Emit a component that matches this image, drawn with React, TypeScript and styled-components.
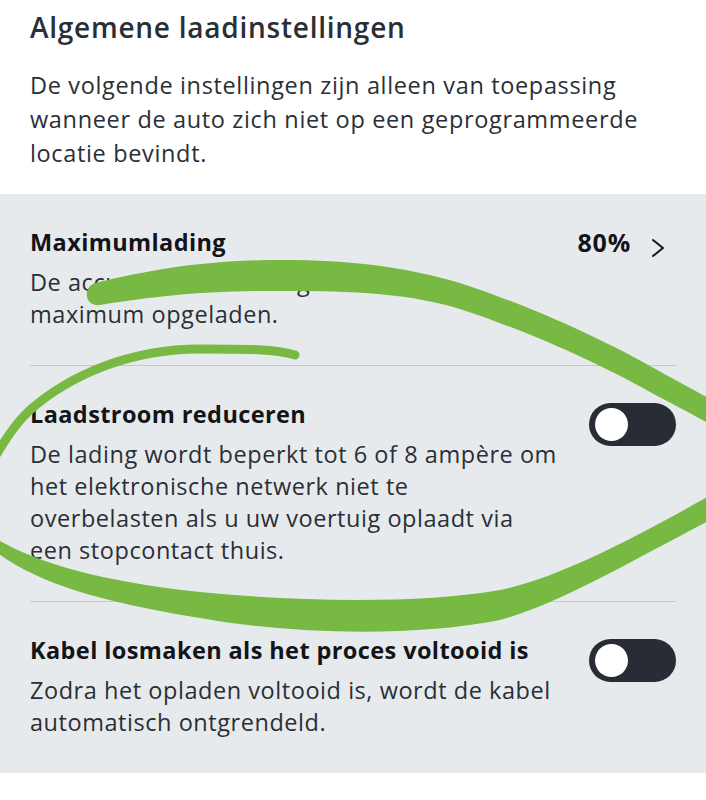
import styled, { createGlobalStyle } from "styled-components";

const GlobalStyle = createGlobalStyle`
  html, body {
    margin: 0;
    padding: 0;
    background: #ffffff;
  }
  body {
    font-family: "Open Sans", "Noto Sans", sans-serif;
    color: #2a2f36;
    -webkit-font-smoothing: antialiased;
  }
`;

const Page = styled.div`
  position: relative;
  width: 706px;
  height: 800px;
  overflow: hidden;
  background: #ffffff;
`;

const Header = styled.header`
  padding: 10px 30px 24px;
`;

const Heading = styled.h1`
  margin: 0;
  font-size: 28px;
  line-height: 34px;
  font-weight: 600;
  letter-spacing: 0.75px;
  color: #2a2f36;
`;

const Intro = styled.p`
  margin: 24px 0 0;
  font-size: 23.5px;
  line-height: 34px;
  font-weight: 400;
  letter-spacing: 0.65px;
`;

const Panel = styled.section`
  background: #e7eaed;
  padding: 0 30px;
`;

const Row = styled.div`
  display: flex;
  align-items: flex-start;
  justify-content: space-between;
  gap: 24px;
  padding: 32px 0 35px;
  border-bottom: 1px solid #c4c9cf;

  &:last-child {
    border-bottom: none;
  }
`;

const RowText = styled.div`
  display: flex;
  flex-direction: column;
  gap: 8px;
`;

const RowTitle = styled.div`
  font-size: 23.5px;
  line-height: 32px;
  font-weight: 700;
  letter-spacing: 0.4px;
  color: #121417;
`;

const RowDesc = styled.div`
  font-size: 23.5px;
  line-height: 32px;
  letter-spacing: 0.55px;
  color: #2a2f36;
  white-space: nowrap;
`;

const Value = styled.div`
  display: flex;
  align-items: center;
  gap: 20px;
  height: 32px;
  font-size: 25px;
  font-weight: 700;
  letter-spacing: 0.8px;
  color: #121417;
  white-space: nowrap;
`;

const Chevron = styled.svg`
  width: 14px;
  height: 20px;
  margin-top: 12px;
  margin-right: 11px;
`;

const Switch = styled.button`
  flex: none;
  display: flex;
  align-items: center;
  width: 87px;
  height: 43px;
  margin-top: 5px;
  padding: 0 6px;
  border: none;
  border-radius: 22px;
  background: #272c35;
`;

const Knob = styled.span`
  width: 33px;
  height: 33px;
  border-radius: 50%;
  background: #ffffff;
`;

const Scribble = styled.svg`
  position: absolute;
  inset: 0;
  width: 706px;
  height: 800px;
  pointer-events: none;
`;

type SettingProps = {
  title: string;
  lines: string[];
  children: React.ReactNode;
};

function Setting({ title, lines, children }: SettingProps) {
  return (
    <Row>
      <RowText>
        <RowTitle>{title}</RowTitle>
        <RowDesc>
          {lines.map((line, i) => (
            <div key={i}>{line}</div>
          ))}
        </RowDesc>
      </RowText>
      {children}
    </Row>
  );
}

function Toggle() {
  return (
    <Switch aria-label="toggle">
      <Knob />
    </Switch>
  );
}

export default function App() {
  return (
    <Page>
      <GlobalStyle />
      <Header>
        <Heading>Algemene laadinstellingen</Heading>
        <Intro>
          De volgende instellingen zijn alleen van toepassing
          <br />
          wanneer de auto zich niet op een geprogrammeerde
          <br />
          locatie bevindt.
        </Intro>
      </Header>
      <Panel>
        <Setting
          title="Maximumlading"
          lines={["De accu wordt tot de ingestelde", "maximum opgeladen."]}
        >
          <Value>
            80%
            <Chevron viewBox="0 0 14 20">
              <path
                d="M2 2 L12 10 L2 18"
                fill="none"
                stroke="#121417"
                strokeWidth="2"
                strokeLinecap="round"
                strokeLinejoin="round"
              />
            </Chevron>
          </Value>
        </Setting>
        <Setting
          title="Laadstroom reduceren"
          lines={[
            "De lading wordt beperkt tot 6 of 8 ampère om",
            "het elektronische netwerk niet te",
            "overbelasten als u uw voertuig oplaadt via",
            "een stopcontact thuis.",
          ]}
        >
          <Toggle />
        </Setting>
        <Setting
          title="Kabel losmaken als het proces voltooid is"
          lines={[
            "Zodra het opladen voltooid is, wordt de kabel",
            "automatisch ontgrendeld.",
          ]}
        >
          <Toggle />
        </Setting>
      </Panel>

      {/* marker scribble drawn over the screenshot */}
      <Scribble viewBox="0 0 706 800">
        <path
          d="M95 283 C150 270 200 261 270 260 C340 259 400 265 460 283 C530 306 600 338 650 366 C680 383 700 393 730 410 L730 436 C700 418 680 408 650 392 C600 364 530 332 460 309 C400 291 340 291 270 291 C200 291 150 297 100 305 C85 307 82 288 95 283 Z"
          fill="#78b943"
        />
        <path
          d="M295 355 C275 349 250 349 200 349 C130 349 70 375 30 410 C15 424 5 440 -8 462"
          fill="none"
          stroke="#78b943"
          strokeWidth="9"
          strokeLinecap="round"
        />
        <path
          d="M-10 535 C30 560 90 580 200 592 C300 602 420 604 500 590 C560 578 640 535 720 490 L720 515 C640 556 560 604 500 620 C420 636 300 636 200 618 C90 600 30 580 -10 547 Z"
          fill="#78b943"
        />
      </Scribble>
    </Page>
  );
}
